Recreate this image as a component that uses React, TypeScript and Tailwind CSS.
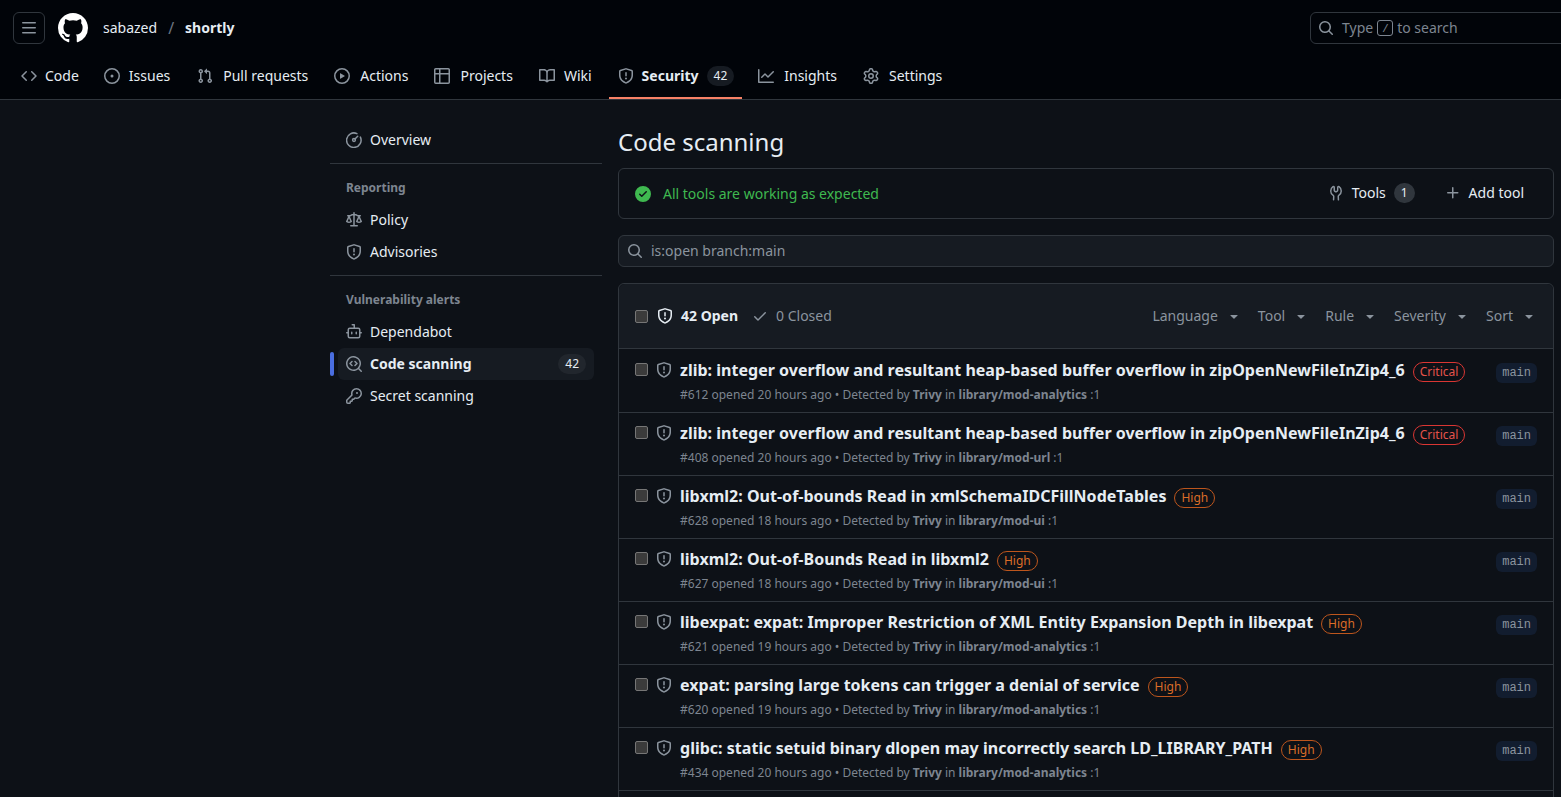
import type { ReactNode } from 'react';

type IconProps = { className?: string };
type IconType = (props: IconProps) => ReactNode;

// octicons at their 16px size
const octicon = (d: string): IconType =>
  function Octicon({ className }: IconProps) {
    return (
      <svg viewBox="0 0 16 16" fill="currentColor" className={className}>
        <path d={d} />
      </svg>
    );
  };

const GithubMark = octicon('M8 0c4.42 0 8 3.58 8 8a8.013 8.013 0 0 1-5.45 7.59c-.4.08-.55-.17-.55-.38 0-.27.01-1.13.01-2.2 0-.75-.25-1.23-.54-1.48 1.78-.2 3.65-.88 3.65-3.95 0-.88-.31-1.59-.82-2.15.08-.2.36-1.02-.08-2.12 0 0-.67-.22-2.2.82-.64-.18-1.32-.27-2-.27-.68 0-1.36.09-2 .27-1.53-1.03-2.2-.82-2.2-.82-.44 1.1-.16 1.92-.08 2.12-.51.56-.82 1.28-.82 2.15 0 3.06 1.86 3.75 3.64 3.95-.23.2-.44.55-.51 1.07-.46.21-1.61.55-2.33-.66-.15-.24-.6-.83-1.23-.82-.67.01-.27.38.01.53.34.19.73.9.82 1.13.16.45.68 1.31 2.69.94 0 .67.01 1.3.01 1.49 0 .21-.15.45-.55.38A7.995 7.995 0 0 1 0 8c0-4.42 3.58-8 8-8Z');
const ThreeBars = octicon('M1 2.75A.75.75 0 0 1 1.75 2h12.5a.75.75 0 0 1 0 1.5H1.75A.75.75 0 0 1 1 2.75Zm0 5A.75.75 0 0 1 1.75 7h12.5a.75.75 0 0 1 0 1.5H1.75A.75.75 0 0 1 1 7.75ZM1.75 12h12.5a.75.75 0 0 1 0 1.5H1.75a.75.75 0 0 1 0-1.5Z');
const Shield = octicon('M7.467.133a1.748 1.748 0 0 1 1.066 0l5.25 1.68A1.75 1.75 0 0 1 15 3.48V7c0 1.566-.32 3.182-1.303 4.682-.983 1.498-2.585 2.813-5.032 3.855a1.697 1.697 0 0 1-1.33 0c-2.447-1.042-4.049-2.357-5.032-3.855C1.32 10.182 1 8.566 1 7V3.48a1.75 1.75 0 0 1 1.217-1.667Zm.61 1.429a.25.25 0 0 0-.153 0l-5.25 1.68a.25.25 0 0 0-.174.238V7c0 1.358.275 2.666 1.057 3.86.784 1.194 2.121 2.34 4.366 3.297a.196.196 0 0 0 .154 0c2.245-.956 3.582-2.104 4.366-3.298C13.225 9.666 13.5 8.36 13.5 7V3.48a.251.251 0 0 0-.174-.237l-5.25-1.68ZM8.75 4.75v3a.75.75 0 0 1-1.5 0v-3a.75.75 0 0 1 1.5 0ZM9 10.5a1 1 0 1 1-2 0 1 1 0 0 1 2 0Z');
const Code = octicon('m11.28 3.22 4.25 4.25a.75.75 0 0 1 0 1.06l-4.25 4.25a.749.749 0 0 1-1.275-.326.749.749 0 0 1 .215-.734L13.94 8l-3.72-3.72a.749.749 0 0 1 .326-1.275.749.749 0 0 1 .734.215Zm-6.56 0a.751.751 0 0 1 1.042.018.751.751 0 0 1 .018 1.042L2.06 8l3.72 3.72a.749.749 0 0 1-.326 1.275.749.749 0 0 1-.734-.215L.47 8.53a.75.75 0 0 1 0-1.06Z');
const IssueOpened = octicon('M8 9.5a1.5 1.5 0 1 0 0-3 1.5 1.5 0 0 0 0 3ZM8 0a8 8 0 1 1 0 16A8 8 0 0 1 8 0ZM1.5 8a6.5 6.5 0 1 0 13 0 6.5 6.5 0 0 0-13 0Z');
const PullRequest = octicon('M1.5 3.25a2.25 2.25 0 1 1 3 2.122v5.256a2.251 2.251 0 1 1-1.5 0V5.372A2.25 2.25 0 0 1 1.5 3.25Zm5.677-.177L9.573.677A.25.25 0 0 1 10 .854V2.5h1A2.5 2.5 0 0 1 13.5 5v5.628a2.251 2.251 0 1 1-1.5 0V5a1 1 0 0 0-1-1h-1v1.646a.25.25 0 0 1-.427.177L7.177 3.427a.25.25 0 0 1 0-.354ZM3.75 2.5a.75.75 0 1 0 0 1.5.75.75 0 0 0 0-1.5Zm0 9.5a.75.75 0 1 0 0 1.5.75.75 0 0 0 0-1.5Zm8.25.75a.75.75 0 1 0 1.5 0 .75.75 0 0 0-1.5 0Z');
const Play = octicon('M8 0a8 8 0 1 1 0 16A8 8 0 0 1 8 0ZM1.5 8a6.5 6.5 0 1 0 13 0 6.5 6.5 0 0 0-13 0Zm4.879-2.773 4.264 2.559a.25.25 0 0 1 0 .428l-4.264 2.559A.25.25 0 0 1 6 10.559V5.442a.25.25 0 0 1 .379-.215Z');
const Table = octicon('M0 1.75C0 .784.784 0 1.75 0h12.5C15.216 0 16 .784 16 1.75v12.5A1.75 1.75 0 0 1 14.25 16H1.75A1.75 1.75 0 0 1 0 14.25ZM6.5 6.5v8h7.75a.25.25 0 0 0 .25-.25V6.5Zm8-1.5V1.75a.25.25 0 0 0-.25-.25H6.5V5Zm-13 1.5v7.75c0 .138.112.25.25.25H5v-8ZM5 5V1.5H1.75a.25.25 0 0 0-.25.25V5Z');
const Book = octicon('M0 1.75A.75.75 0 0 1 .75 1h4.253c1.227 0 2.317.59 3 1.501A3.743 3.743 0 0 1 11.006 1h4.245a.75.75 0 0 1 .75.75v10.5a.75.75 0 0 1-.75.75h-4.507a2.25 2.25 0 0 0-1.591.659l-.622.621a.75.75 0 0 1-1.06 0l-.622-.621A2.25 2.25 0 0 0 5.258 13H.75a.75.75 0 0 1-.75-.75Zm7.251 10.324.004-5.073-.002-2.253A2.25 2.25 0 0 0 5.003 2.5H1.5v9h3.757a3.75 3.75 0 0 1 1.994.574ZM8.755 4.75l-.004 7.322a3.752 3.752 0 0 1 1.992-.572H14.5v-9h-3.495a2.25 2.25 0 0 0-2.25 2.25Z');
const Graph = octicon('M1.5 1.75V13.5h13.75a.75.75 0 0 1 0 1.5H.75a.75.75 0 0 1-.75-.75V1.75a.75.75 0 0 1 1.5 0Zm14.28 2.53-5.25 5.25a.75.75 0 0 1-1.06 0L7 7.06 4.28 9.78a.751.751 0 0 1-1.042-.018.751.751 0 0 1-.018-1.042l3.25-3.25a.75.75 0 0 1 1.06 0L10 7.94l4.72-4.72a.751.751 0 0 1 1.042.018.751.751 0 0 1 .018 1.042Z');
const Gear = octicon('M8 0a8.2 8.2 0 0 1 .701.031C9.444.095 9.99.645 10.16 1.29l.288 1.107c.018.066.079.158.212.224.231.114.454.243.668.386.123.082.233.09.299.071l1.103-.303c.644-.176 1.392.021 1.82.63.27.385.506.792.704 1.218.315.675.111 1.422-.364 1.891l-.814.806c-.049.048-.098.147-.088.294.016.257.016.515 0 .772-.01.147.038.246.088.294l.814.806c.475.469.679 1.216.364 1.891a7.977 7.977 0 0 1-.704 1.217c-.428.61-1.176.807-1.82.63l-1.102-.302c-.067-.019-.177-.011-.3.071a5.909 5.909 0 0 1-.668.386c-.133.066-.194.158-.211.224l-.29 1.106c-.168.646-.715 1.196-1.458 1.26a8.006 8.006 0 0 1-1.402 0c-.743-.064-1.289-.614-1.458-1.26l-.289-1.106c-.018-.066-.079-.158-.212-.224a5.738 5.738 0 0 1-.668-.386c-.123-.082-.233-.09-.299-.071l-1.103.303c-.644.176-1.392-.021-1.82-.63a8.12 8.12 0 0 1-.704-1.218c-.315-.675-.111-1.422.363-1.891l.815-.806c.05-.048.098-.147.088-.294a6.214 6.214 0 0 1 0-.772c.01-.147-.038-.246-.088-.294l-.815-.806C.635 6.045.431 5.298.746 4.623a7.92 7.92 0 0 1 .704-1.217c.428-.61 1.176-.807 1.82-.63l1.102.302c.067.019.177.011.3-.071.214-.143.437-.272.668-.386.133-.066.194-.158.211-.224l.29-1.106C6.009.645 6.556.095 7.299.03 7.53.01 7.764 0 8 0Zm-.571 1.525c-.036.003-.108.036-.137.146l-.289 1.105c-.147.561-.549.967-.998 1.189-.173.086-.34.183-.5.29-.417.278-.97.423-1.529.27l-1.103-.303c-.109-.03-.175.016-.195.045-.22.312-.412.644-.573.99-.014.031-.021.11.059.19l.815.806c.411.406.562.957.53 1.456a4.709 4.709 0 0 0 0 .582c.032.499-.119 1.05-.53 1.456l-.815.806c-.081.08-.073.159-.059.19.162.346.353.677.573.989.02.03.085.076.195.046l1.102-.303c.56-.153 1.113-.008 1.53.27.161.107.328.204.501.29.447.222.85.629.997 1.189l.289 1.105c.029.109.101.143.137.146a6.6 6.6 0 0 0 1.142 0c.036-.003.108-.036.137-.146l.289-1.105c.147-.561.549-.967.998-1.189.173-.086.34-.183.5-.29.417-.278.97-.423 1.529-.27l1.103.303c.109.029.175-.016.195-.045.22-.313.411-.644.573-.99.014-.031.021-.11-.059-.19l-.815-.806c-.411-.406-.562-.957-.53-1.456a4.709 4.709 0 0 0 0-.582c-.032-.499.119-1.05.53-1.456l.815-.806c.081-.08.073-.159.059-.19a6.464 6.464 0 0 0-.573-.989c-.02-.03-.085-.076-.195-.046l-1.102.303c-.56.153-1.113.008-1.53-.27a4.44 4.44 0 0 0-.501-.29c-.447-.222-.85-.629-.997-1.189l-.289-1.105c-.029-.11-.101-.143-.137-.146a6.6 6.6 0 0 0-1.142 0ZM11 8a3 3 0 1 1-6 0 3 3 0 0 1 6 0ZM9.5 8a1.5 1.5 0 1 0-3.001.001A1.5 1.5 0 0 0 9.5 8Z');
const Law = octicon('M8.75.75V2h.985c.304 0 .603.08.867.231l1.29.736c.038.022.08.033.124.033h2.234a.75.75 0 0 1 0 1.5h-.427l2.111 4.692a.75.75 0 0 1-.154.838l-.53-.53.529.531-.001.002-.002.002-.006.006-.006.005-.01.01-.045.04c-.21.176-.441.327-.686.45C14.556 10.78 13.88 11 13 11a4.498 4.498 0 0 1-2.023-.454 3.544 3.544 0 0 1-.686-.45l-.045-.04-.016-.015-.006-.006-.004-.004v-.001a.75.75 0 0 1-.154-.838L12.178 4.5h-.162c-.305 0-.604-.079-.868-.231l-1.29-.736a.245.245 0 0 0-.124-.033H8.75V13h2.5a.75.75 0 0 1 0 1.5h-6.5a.75.75 0 0 1 0-1.5h2.5V3.5h-.984a.245.245 0 0 0-.124.033l-1.289.737c-.265.15-.564.23-.869.23h-.162l2.112 4.692a.75.75 0 0 1-.154.838l-.53-.53.529.531-.001.002-.002.002-.006.006-.016.015-.045.04c-.21.176-.441.327-.686.45C4.556 10.78 3.88 11 3 11a4.498 4.498 0 0 1-2.023-.454 3.544 3.544 0 0 1-.686-.45l-.045-.04-.016-.015-.006-.006-.004-.004v-.001a.75.75 0 0 1-.154-.838L2.178 4.5H1.75a.75.75 0 0 1 0-1.5h2.234a.249.249 0 0 0 .125-.033l1.288-.737c.265-.15.564-.23.869-.23h.984V.75a.75.75 0 0 1 1.5 0Zm2.945 8.477c.285.135.718.273 1.305.273s1.02-.138 1.305-.273L13 6.327Zm-10 0c.285.135.718.273 1.305.273s1.02-.138 1.305-.273L3 6.327Z');
const Dependabot = octicon('M5.75 7.5a.75.75 0 0 1 .75.75v1.5a.75.75 0 0 1-1.5 0v-1.5a.75.75 0 0 1 .75-.75Zm5.25.75a.75.75 0 0 0-1.5 0v1.5a.75.75 0 0 0 1.5 0v-1.5ZM6.25 0h2A.75.75 0 0 1 9 .75V3.5h3.25a2.25 2.25 0 0 1 2.25 2.25V8h.75a.75.75 0 0 1 0 1.5h-.75v2.75a2.25 2.25 0 0 1-2.25 2.25h-8.5a2.25 2.25 0 0 1-2.25-2.25V9.5H.75a.75.75 0 0 1 0-1.5h.75V5.75A2.25 2.25 0 0 1 3.75 3.5H7.5v-2H6.25a.75.75 0 0 1 0-1.5ZM3 5.75v6.5c0 .414.336.75.75.75h8.5a.75.75 0 0 0 .75-.75v-6.5a.75.75 0 0 0-.75-.75h-8.5a.75.75 0 0 0-.75.75Z');
const Codescan = octicon('M8.47 4.97a.75.75 0 0 0 0 1.06L9.94 7.5 8.47 8.97a.75.75 0 1 0 1.06 1.06l2-2a.75.75 0 0 0 0-1.06l-2-2a.75.75 0 0 0-1.06 0ZM6.53 6.03a.75.75 0 0 0-1.06-1.06l-2 2a.75.75 0 0 0 0 1.06l2 2a.75.75 0 1 0 1.06-1.06L5.06 7.5l1.47-1.47ZM12.246 13.307a7.501 7.501 0 1 1 1.06-1.06l2.474 2.473a.749.749 0 0 1-.326 1.275.749.749 0 0 1-.734-.215ZM1.5 7.5a6.002 6.002 0 0 0 3.608 5.504 6.002 6.002 0 0 0 6.486-1.117.748.748 0 0 1 .292-.293A6 6 0 1 0 1.5 7.5Z');
const Key = octicon('M10.5 0a5.499 5.499 0 1 1-1.288 10.848l-.932.932a.749.749 0 0 1-.53.22H7v.75a.749.749 0 0 1-.22.53l-.5.5a.749.749 0 0 1-.53.22H5v.75a.749.749 0 0 1-.22.53l-.5.5a.749.749 0 0 1-.53.22h-2A1.75 1.75 0 0 1 0 14.25v-2c0-.199.079-.389.22-.53l4.932-4.932A5.5 5.5 0 0 1 10.5 0Zm-4 5.5c-.001.431.069.86.205 1.269a.75.75 0 0 1-.181.768L1.5 12.56v1.69c0 .138.112.25.25.25h1.69l.06-.06v-1.19a.75.75 0 0 1 .75-.75h1.19l.06-.06v-1.19a.75.75 0 0 1 .75-.75h1.19l1.023-1.025a.75.75 0 0 1 .768-.18A4 4 0 1 0 6.5 5.5ZM11 6a1 1 0 1 1 0-2 1 1 0 0 1 0 2Z');
const Tools = octicon('M5.433 2.304A4.492 4.492 0 0 0 3.5 6c0 1.598.832 3.002 2.09 3.802.518.328.929.923.902 1.64v.008l-.164 3.337a.75.75 0 1 1-1.498-.073l.163-3.33c.002-.085-.05-.216-.207-.316A5.996 5.996 0 0 1 2 6a5.993 5.993 0 0 1 2.567-4.92 1.482 1.482 0 0 1 1.673-.04c.462.296.76.827.76 1.423v2.82c0 .082.041.16.11.206l.75.51a.25.25 0 0 0 .28 0l.75-.51A.249.249 0 0 0 9 5.282V2.463c0-.596.298-1.127.76-1.423a1.482 1.482 0 0 1 1.673.04A5.993 5.993 0 0 1 14 6a5.996 5.996 0 0 1-2.786 5.068c-.157.1-.209.23-.207.315l.163 3.33a.752.752 0 0 1-1.094.714.75.75 0 0 1-.404-.64l-.164-3.345c-.027-.717.384-1.312.902-1.64A4.495 4.495 0 0 0 12.5 6a4.492 4.492 0 0 0-1.933-3.696c-.024-.017-.067-.028-.121-.002-.04.025-.046.073-.046.161v2.82a1.75 1.75 0 0 1-.765 1.446l-.75.51a1.75 1.75 0 0 1-1.97 0l-.75-.51A1.75 1.75 0 0 1 5.5 5.282V2.463c0-.088-.006-.136-.046-.161-.054-.026-.097-.015-.121.002Z');
const Search = octicon('M10.68 11.74a6 6 0 0 1-7.922-8.982 6 6 0 0 1 8.982 7.922l3.04 3.04a.749.749 0 0 1-.326 1.275.749.749 0 0 1-.734-.215ZM11.5 7a4.499 4.499 0 1 0-8.997 0A4.499 4.499 0 0 0 11.5 7Z');
const Check = octicon('M13.78 4.22a.75.75 0 0 1 0 1.06l-7.25 7.25a.75.75 0 0 1-1.06 0L2.22 9.28a.751.751 0 0 1 .018-1.042.751.751 0 0 1 1.042-.018L6 10.94l6.72-6.72a.75.75 0 0 1 1.06 0Z');
const Plus = octicon('M7.75 2a.75.75 0 0 1 .75.75V7h4.25a.75.75 0 0 1 0 1.5H8.5v4.25a.75.75 0 0 1-1.5 0V8.5H2.75a.75.75 0 0 1 0-1.5H7V2.75A.75.75 0 0 1 7.75 2Z');
const CheckCircleFill = octicon('M8 16A8 8 0 1 1 8 0a8 8 0 0 1 0 16Zm3.78-9.72a.751.751 0 0 0-.018-1.042.751.751 0 0 0-1.042-.018L6.75 9.19 5.28 7.72a.751.751 0 0 0-1.042.018.751.751 0 0 0-.018 1.042l2 2a.75.75 0 0 0 1.06 0Z');
const TriangleDown = octicon('m4.427 7.427 3.396 3.396a.25.25 0 0 0 .354 0l3.396-3.396A.25.25 0 0 0 11.396 7H4.604a.25.25 0 0 0-.177.427Z');

function Meter({ className }: IconProps) {
  return (
    <svg viewBox="0 0 16 16" fill="none" stroke="currentColor" strokeWidth="1.5" strokeLinecap="round" className={className}>
      <path d="M10.9 1.6A7.25 7.25 0 1 0 14.4 5.1" />
      <path d="M9 7l2.7-2.7" />
      <circle cx="8" cy="8" r="1.4" />
    </svg>
  );
}

const repoTabs: { label: string; icon: IconType; spacing: string }[] = [
  { label: 'Code', icon: Code, spacing: 'gap-2 pr-[9px]' },
  { label: 'Issues', icon: IssueOpened, spacing: 'gap-[9px] pr-[11px]' },
  { label: 'Pull requests', icon: PullRequest, spacing: 'gap-[10px] pr-[10px]' },
  { label: 'Actions', icon: Play, spacing: 'gap-[10px] pr-[10px]' },
  { label: 'Projects', icon: Table, spacing: 'gap-[10px] pr-[10px]' },
  { label: 'Wiki', icon: Book, spacing: 'gap-[9px] pr-[10px]' },
];

const alerts = [
  { title: 'zlib: integer overflow and resultant heap-based buffer overflow in zipOpenNewFileInZip4_6', sev: 'Critical', id: 612, age: '20 hours', path: 'library/mod-analytics' },
  { title: 'zlib: integer overflow and resultant heap-based buffer overflow in zipOpenNewFileInZip4_6', sev: 'Critical', id: 408, age: '20 hours', path: 'library/mod-url' },
  { title: 'libxml2: Out-of-bounds Read in xmlSchemaIDCFillNodeTables', sev: 'High', id: 628, age: '18 hours', path: 'library/mod-ui' },
  { title: 'libxml2: Out-of-Bounds Read in libxml2', sev: 'High', id: 627, age: '18 hours', path: 'library/mod-ui' },
  { title: 'libexpat: expat: Improper Restriction of XML Entity Expansion Depth in libexpat', sev: 'High', id: 621, age: '19 hours', path: 'library/mod-analytics' },
  { title: 'expat: parsing large tokens can trigger a denial of service', sev: 'High', id: 620, age: '19 hours', path: 'library/mod-analytics' },
  { title: 'glibc: static setuid binary dlopen may incorrectly search LD_LIBRARY_PATH', sev: 'High', id: 434, age: '20 hours', path: 'library/mod-analytics' },
];

function Checkbox() {
  return <span className="w-[13px] h-[13px] shrink-0 rounded-[2px] border border-[#767676] bg-[#3b3b3b]" />;
}

function SideItem({ icon: Icon, children }: { icon: IconType; children: ReactNode }) {
  return (
    <div className="flex items-center h-8 mx-2 px-2 gap-2 text-[14px] text-[#e6edf3]">
      <Icon className="w-4 h-4 text-[#8b949e]" />
      <span>{children}</span>
    </div>
  );
}

function SideLabel({ children }: { children: ReactNode }) {
  return <div className="h-10 pl-4 pt-2 flex items-center text-[12px] font-bold text-[#7d8590]">{children}</div>;
}

function Filter({ label }: { label: string }) {
  return (
    <span className="flex items-center gap-2 text-[14px] text-[#8b949e]">
      {label}
      <TriangleDown className="w-4 h-4" />
    </span>
  );
}

function AlertRow({ title, sev, id, age, path }: (typeof alerts)[number]) {
  const critical = sev === 'Critical';
  return (
    <div className="h-[63px] first:h-[64px] first:pt-px border-t border-[#30363d] flex pl-4 pr-4">
      <div className="flex items-start pt-[13px] gap-2">
        <Checkbox />
        <Shield className="w-4 h-4 -mt-px text-[#8b949e]" />
      </div>
      <div className="ml-2 min-w-0 flex-1">
        <div className="flex items-start h-[22px] mt-[9px]">
          <span className="text-[16px] font-bold tracking-[0.017px] text-[#e6edf3] leading-[22px] whitespace-nowrap">{title}</span>
          <span
            className={`ml-2 mt-[3px] h-5 px-[6px] rounded-full border text-[12px] leading-[18px] ${
              critical ? 'border-[#da3633] text-[#e5534b]' : 'border-[#bd561d] text-[#db6d28]'
            }`}
          >
            {sev}
          </span>
        </div>
        <div className="mt-[5px] text-[12px] leading-[18px] text-[#7d8590] whitespace-nowrap">
          #{id} opened {age} ago • Detected by <span className="font-bold">Trivy</span> in{' '}
          <span className="font-bold">{path}</span> :1
        </div>
      </div>
      <span className="mt-[13px] h-5 px-[6px] rounded-md bg-[#121d2f] text-[12px] leading-5 text-[#8b949e] font-['Liberation_Mono',monospace]">
        main
      </span>
    </div>
  );
}

export default function App() {
  return (
    <div className="h-[797px] overflow-hidden bg-[#0d1117] font-['Noto_Sans',sans-serif] leading-5 text-[#e6edf3]">
      <header className="h-[100px] bg-[#010409] border-b border-[#30363d]">
        <div className="flex items-center h-[56px] pl-[13px]">
          <span className="flex items-center justify-center w-8 h-8 rounded-md border border-[#30363d] text-[#8b949e]">
            <ThreeBars className="w-4 h-4" />
          </span>
          <GithubMark className="ml-[13px] w-[30px] h-[30px] text-white" />
          <span className="ml-[15px] text-[14px] text-[#e6edf3]">sabazed</span>
          <span className="mx-[11px] text-[16px] text-[#6e7681]">/</span>
          <span className="text-[14px] font-bold text-[#e6edf3]">shortly</span>
          <div className="ml-auto -mr-4 flex items-center w-[267px] h-8 rounded-md border border-[#30363d] pl-[7px] text-[14px] text-[#7d8590]">
            <Search className="w-4 h-4 text-[#8b949e]" />
            <span className="ml-2">Type</span>
            <span className="mx-[4px] flex items-center justify-center w-4 h-4 rounded-[3px] border border-[#7d8590] text-[11px] italic">/</span>
            <span>to search</span>
          </div>
        </div>
        <nav className="flex h-[43px] pl-[13px] text-[14px]">
          {repoTabs.map(({ label, icon: Icon, spacing }) => (
            <div key={label} className={`flex items-center ${spacing} pl-2 mr-2 h-10`}>
              <Icon className="w-4 h-4 text-[#8b949e]" />
              <span>{label}</span>
            </div>
          ))}
          <div className="flex items-center gap-2 pl-[9px] pr-2 mr-2 -ml-px h-[43px] pb-px border-b-2 border-[#f78166]">
            <Shield className="w-4 h-4 text-[#8b949e]" />
            <span className="font-bold">Security</span>
            <span className="px-[7px] rounded-full bg-[#161b22] text-[12px] leading-5">42</span>
          </div>
          <div className="flex items-center gap-[10px] pl-2 pr-[10px] mr-2 h-10">
            <Graph className="w-4 h-4 text-[#8b949e]" />
            <span>Insights</span>
          </div>
          <div className="flex items-center gap-[10px] pl-2 pr-2 mr-2 h-10">
            <Gear className="w-4 h-4 text-[#8b949e]" />
            <span>Settings</span>
          </div>
        </nav>
      </header>

      <div className="flex pl-[330px] pr-[7px]">
        <aside className="w-[272px] shrink-0 pt-6">
          <SideItem icon={Meter}>Overview</SideItem>
          <div className="mt-[7px] h-px bg-[#30363d]" />
          <SideLabel>Reporting</SideLabel>
          <SideItem icon={Law}>Policy</SideItem>
          <SideItem icon={Shield}>Advisories</SideItem>
          <div className="mt-[7px] h-px bg-[#30363d]" />
          <SideLabel>Vulnerability alerts</SideLabel>
          <SideItem icon={Dependabot}>Dependabot</SideItem>
          <div className="relative flex items-center h-8 mx-2 px-2 gap-2 rounded-md bg-[#161b22] text-[14px]">
            <span className="absolute left-[-8px] top-1 w-1 h-6 rounded-md bg-[#4a6ee0]" />
            <Codescan className="w-4 h-4 text-[#8b949e]" />
            <span className="font-bold">Code scanning</span>
            <span className="ml-auto px-[7px] rounded-full bg-[#21262d] text-[12px] leading-5">42</span>
          </div>
          <SideItem icon={Key}>Secret scanning</SideItem>
        </aside>

        <main className="ml-4 flex-1 min-w-0">
          <h1 className="mt-6 text-[24px] leading-9 font-normal">Code scanning</h1>
          <div className="mt-2 h-[51px] flex items-center rounded-md border border-[#30363d] pl-4 pr-[29px] text-[14px]">
            <CheckCircleFill className="w-4 h-4 text-[#3fb950]" />
            <span className="ml-3 text-[#3fb950]">All tools are working as expected</span>
            <Tools className="ml-auto mb-[2px] w-4 h-4 text-[#8b949e]" />
            <span className="ml-2 mb-[2px]">Tools</span>
            <span className="ml-2 mb-[2px] px-[7px] rounded-full bg-[#30363d] text-[12px] leading-5">1</span>
            <Plus className="ml-[30px] mb-[2px] w-4 h-4 text-[#8b949e]" />
            <span className="ml-2 mb-[2px]">Add tool</span>
          </div>
          <div className="mt-4 h-8 flex items-center rounded-md border border-[#30363d] bg-[#161b22] pl-2 text-[14px] text-[#8b949e]">
            <Search className="w-4 h-4" />
            <span className="ml-2">is:open branch:main</span>
          </div>
          <section className="mt-4 h-[600px] rounded-t-md border border-[#30363d]">
            <div className="h-[64px] flex items-center bg-[#161b22] rounded-t-md pl-4 pr-4 text-[14px]">
              <Checkbox />
              <Shield className="ml-[9px] w-4 h-4 text-[#e6edf3]" />
              <span className="ml-2 font-bold">42 Open</span>
              <Check className="ml-[14px] w-4 h-4 text-[#8b949e]" />
              <span className="ml-2 text-[#8b949e]">0 Closed</span>
              <div className="ml-auto flex items-center gap-[16px]">
                <Filter label="Language" />
                <Filter label="Tool" />
                <Filter label="Rule" />
                <Filter label="Severity" />
                <Filter label="Sort" />
              </div>
            </div>
            <div>
              {alerts.map((alert) => (
                <AlertRow key={alert.id} {...alert} />
              ))}
            </div>
            <div className="border-t border-[#30363d]" />
          </section>
        </main>
      </div>
    </div>
  );
}
